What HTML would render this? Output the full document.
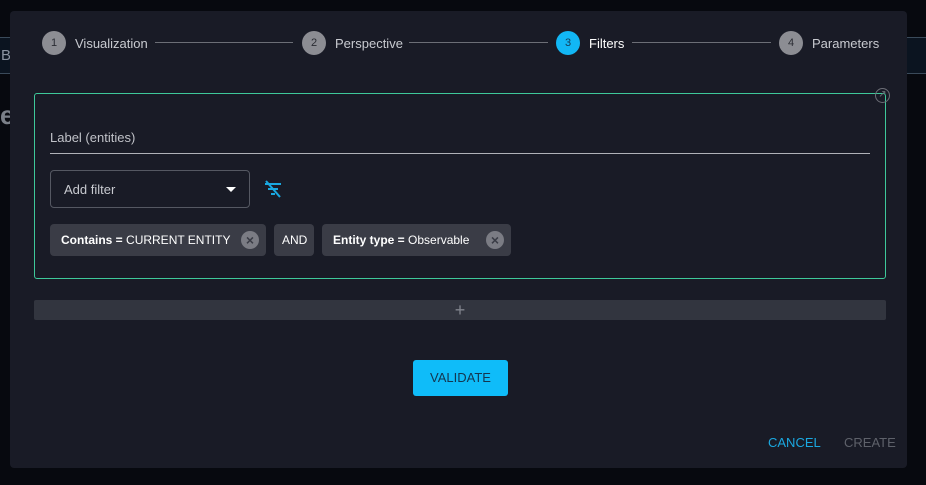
<!DOCTYPE html>
<html><head><style>
*{box-sizing:border-box;margin:0;padding:0}
body{width:926px;height:485px;background:#07090f;font-family:"Liberation Sans",sans-serif;position:relative;overflow:hidden}
.bgbox{position:absolute;top:37px;height:37px;background:#0b1420;border-top:1px solid #3a4a5a;border-bottom:1px solid #3a4a5a}
.dlg{position:absolute;left:10px;top:11px;width:897px;height:457px;background:#191b26;border-radius:4px}
.step{position:absolute;top:31px;display:flex;align-items:center;font-size:13px;color:#c8cad0}
.c{width:24px;height:24px;border-radius:50%;background:#8c8d93;color:#2a2c33;font-size:11px;display:flex;align-items:center;justify-content:center;margin-right:9px}
.line{position:absolute;top:42px;height:1px;background:#6c6e76}
.box{position:absolute;left:34px;top:93px;width:852px;height:186px;border:1px solid #3ec99a;border-radius:3px}
.chip{position:absolute;top:224px;height:32px;background:#3a3c46;border-radius:4px;color:#fff;font-size:12px;display:flex;align-items:center;padding-left:11px}
.x{position:absolute;right:7px;top:7px;width:18px;height:18px;border-radius:50%;background:#7b7c84;color:#3a3c46;font-size:14px;font-weight:bold;display:flex;align-items:center;justify-content:center}
</style></head><body>
<div class="bgbox" style="left:0;width:10px"><span style="color:#8a93a0;font-size:15px;position:absolute;left:1px;top:9px">B</span></div>
<div class="bgbox" style="left:907px;width:19px"></div>
<div style="position:absolute;left:0;top:100px;color:#7a7f88;font-size:26px;font-weight:bold">e</div>
<div class="dlg"></div>
<div class="step" style="left:42px"><div class="c">1</div>Visualization</div>
<div class="line" style="left:155px;width:138px"></div>
<div class="step" style="left:302px"><div class="c">2</div>Perspective</div>
<div class="line" style="left:409px;width:139px"></div>
<div class="step" style="left:556px;color:#fff"><div class="c" style="background:#12b7f5;color:#153a55">3</div>Filters</div>
<div class="line" style="left:632px;width:139px"></div>
<div class="step" style="left:779px"><div class="c">4</div>Parameters</div>
<div class="box"></div>
<div style="position:absolute;left:875px;top:88px;width:15px;height:15px;border:1.5px solid #6c6e76;border-radius:50%;color:#6c6e76;font-size:10px;line-height:12px;text-align:center">↗</div>
<div style="position:absolute;left:50px;top:130px;color:#c0c2c8;font-size:13px">Label (entities)</div>
<div style="position:absolute;left:50px;top:153px;width:820px;height:1px;background:#b0b2b8"></div>
<div style="position:absolute;left:50px;top:170px;width:200px;height:38px;border:1px solid #555862;border-radius:4px;color:#c8cad0;font-size:13px;padding:11px 13px">Add filter<span style="position:absolute;right:13px;top:16px;border-left:5px solid transparent;border-right:5px solid transparent;border-top:5px solid #fff"></span></div>
<svg style="position:absolute;left:263px;top:180px" width="20" height="18" viewBox="0 0 20 18"><g stroke="#1aa8e0" stroke-width="2" fill="none"><path d="M2 4H18M5 9H15M8 14H12"/><path d="M3 1L17 17"/></g></svg>
<div class="chip" style="left:50px;width:216px"><b>Contains =</b>&nbsp;CURRENT ENTITY<div class="x">×</div></div>
<div class="chip" style="left:274px;width:40px;padding-left:8px">AND</div>
<div class="chip" style="left:322px;width:189px"><b>Entity type =</b>&nbsp;Observable<div class="x">×</div></div>
<div style="position:absolute;left:34px;top:300px;width:852px;height:20px;background:#32353f;border-radius:2px;color:#80838c;text-align:center;font-size:18px;line-height:20px">+</div>
<div style="position:absolute;left:413px;top:360px;width:95px;height:36px;background:#0fbcf9;border-radius:3px;color:#143650;font-size:13px;text-align:center;line-height:36px">VALIDATE</div>
<div style="position:absolute;left:768px;top:435px;color:#1aa8e0;font-size:13px">CANCEL</div>
<div style="position:absolute;left:844px;top:435px;color:#5e616a;font-size:13px">CREATE</div>
</body></html>
